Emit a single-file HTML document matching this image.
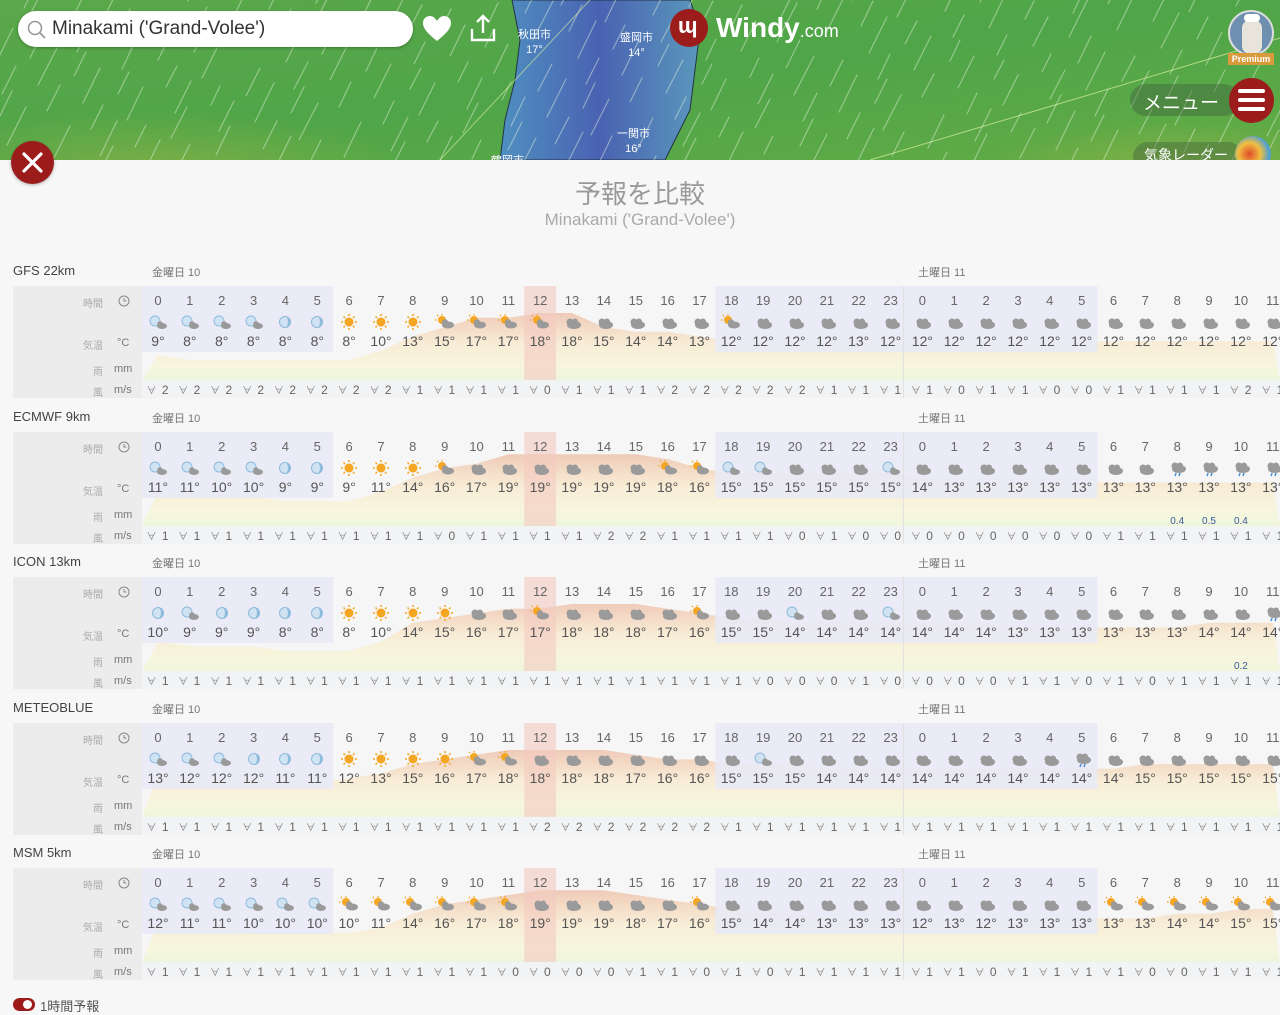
<!DOCTYPE html>
<html><head><meta charset="utf-8">
<style>
*{margin:0;padding:0;box-sizing:border-box}
body{width:1280px;height:1011px;overflow:hidden;background:#f7f7f7;font-family:"Liberation Sans","Noto Sans CJK JP",sans-serif;position:relative}
#map{position:absolute;left:0;top:0;width:1280px;height:160px;overflow:hidden}
.abs{position:absolute}
.blk{position:absolute;left:0;width:1280px;height:146px}
.ttl{position:absolute;left:13px;top:-3px;font-size:13px;color:#444}
.day{position:absolute;top:-2px;font-size:11px;color:#777}
.box{position:absolute;left:13px;top:20px;width:1267px;height:112px;background:#ececec;overflow:hidden}
.lab{position:absolute;font-size:10px;color:#aaa}
.unit{position:absolute;font-size:11px;color:#777}
.c{position:absolute;width:32px;text-align:center;color:#666}
</style></head><body>
<div id="map">
<svg width="1280" height="160" style="position:absolute;left:0;top:0">
<defs>
<linearGradient id="gg" x1="0" y1="0" x2="1" y2="1"><stop offset="0" stop-color="#5aa84a"/><stop offset="0.5" stop-color="#4fa548"/><stop offset="1" stop-color="#62ab46"/></linearGradient>
<linearGradient id="bl" x1="0" y1="0" x2="1" y2="0"><stop offset="0" stop-color="#4f8fc0"/><stop offset="0.5" stop-color="#4a62b2"/><stop offset="1" stop-color="#5a98bc"/></linearGradient>
<radialGradient id="y1" cx="0.5" cy="0.5" r="0.5"><stop offset="0" stop-color="#a8b845" stop-opacity="0.5"/><stop offset="1" stop-color="#a8b845" stop-opacity="0"/></radialGradient>
</defs>
<rect width="1280" height="160" fill="url(#gg)"/>
<ellipse cx="150" cy="170" rx="260" ry="60" fill="url(#y1)"/>
<ellipse cx="1180" cy="170" rx="200" ry="50" fill="url(#y1)"/>
<path d="M512 0 L690 0 L700 30 L695 70 L690 110 L675 140 L665 160 L500 160 L505 120 L515 80 L520 40 Z" fill="url(#bl)" stroke="#234" stroke-width="1"/>
<line x1="590" y1="0" x2="440" y2="160" stroke="#d8f0a0" stroke-width="1" opacity="0.6"/>
<line x1="1280" y1="38" x2="870" y2="160" stroke="#d8f0a0" stroke-width="1" opacity="0.7"/>
<g id="rain" stroke="#e4f2dc" stroke-width="1.2" opacity="0.45" stroke-linecap="round"></g>
</svg>
<div class="abs" style="left:18px;top:11px;width:395px;height:36px;background:#fff;border-radius:18px;box-shadow:0 1px 3px rgba(0,0,0,.3)">
<svg class="abs" style="left:9px;top:9px" width="20" height="20"><circle cx="8" cy="8" r="6.5" fill="none" stroke="#999" stroke-width="1.6"/><line x1="13" y1="13" x2="18" y2="18" stroke="#999" stroke-width="1.8"/></svg>
<div class="abs" style="left:34px;top:7px;font-size:19px;color:#333">Minakami ('Grand-Volee')</div></div>
<svg class="abs" style="left:422px;top:15px" width="30" height="28"><path d="M15 26 C5 18 1 13 1 8 C1 3 5 1 8 1 C11 1 13 3 15 6 C17 3 19 1 22 1 C25 1 29 3 29 8 C29 13 25 18 15 26Z" fill="#fff"/></svg>
<svg class="abs" style="left:468px;top:13px" width="30" height="30"><path d="M15 3 V20 M9 9 L15 3 L21 9 M4 16 V27 H26 V16" fill="none" stroke="#fff" stroke-width="2.4"/></svg>
<div class="abs" style="left:518px;top:28px;font-size:11px;color:#fff;text-align:center;line-height:15px">秋田市<br>17°</div>
<div class="abs" style="left:620px;top:31px;font-size:11px;color:#fff;text-align:center;line-height:15px">盛岡市<br>14°</div>
<div class="abs" style="left:617px;top:127px;font-size:11px;color:#fff;text-align:center;line-height:15px">一関市<br>16°</div>
<div class="abs" style="left:491px;top:152px;font-size:11px;color:#fff">鶴岡市</div>
<div class="abs" style="left:670px;top:9px;width:38px;height:38px;border-radius:50%;background:#9c1c1c"><div class="abs" style="left:8px;top:4px;font-size:22px;color:#fff;font-weight:bold">ɰ</div></div>
<div class="abs" style="left:716px;top:12px;font-size:28px;color:#fff;font-weight:bold">Windy<span style="font-size:18px;font-weight:normal">.com</span></div>
<div class="abs" style="left:1228px;top:10px;width:46px;height:46px;border-radius:50%;background:#6d8fb0;border:2px solid #ddd;overflow:hidden"><div class="abs" style="left:12px;top:8px;width:20px;height:34px;background:#e8e4dc;border-radius:8px"></div><div class="abs" style="left:14px;top:2px;width:16px;height:8px;background:#fff;border-radius:6px"></div></div>
<div class="abs" style="left:1228px;top:53px;width:46px;height:12px;background:#d89a3a;font-size:9px;color:#fff;text-align:center;font-weight:bold;line-height:12px">Premium</div>
<div class="abs" style="left:1130px;top:84px;width:110px;height:32px;border-radius:16px;background:rgba(60,90,60,.4)"></div>
<div class="abs" style="left:1143px;top:88px;font-size:19px;color:#fff">メニュー</div>
<div class="abs" style="left:1229px;top:78px;width:45px;height:45px;border-radius:50%;background:#9c1c1c"><div class="abs" style="left:9px;top:11px;width:27px;height:4px;background:#fff;border-radius:2px"></div><div class="abs" style="left:9px;top:20px;width:27px;height:4px;background:#fff;border-radius:2px"></div><div class="abs" style="left:9px;top:29px;width:27px;height:4px;background:#fff;border-radius:2px"></div></div>
<div class="abs" style="left:1133px;top:142px;width:110px;height:30px;border-radius:15px;background:rgba(60,90,60,.4)"></div>
<div class="abs" style="left:1144px;top:145px;font-size:14px;color:#fff">気象レーダー</div>
<div class="abs" style="left:1235px;top:136px;width:36px;height:36px;border-radius:50%;background:radial-gradient(circle at 40% 50%,#e04a2a,#f0c040 40%,#50a0d0 70%)"></div>
</div>
<div class="abs" style="left:11px;top:141px;width:43px;height:43px;border-radius:50%;background:#9c1c1c;box-shadow:0 1px 3px rgba(0,0,0,.3)"><svg width="43" height="43"><path d="M13 13 L30 30 M30 13 L13 30" stroke="#fff" stroke-width="3.2" stroke-linecap="round"/></svg></div>
<div class="abs" style="left:0;width:1280px;top:174px;text-align:center;font-size:26px;color:#999">予報を比較</div>
<div class="abs" style="left:0;width:1280px;top:210px;text-align:center;font-size:17px;color:#aaa">Minakami ('Grand-Volee')</div>
<div id="blocks"></div>
<div class="abs" style="left:13px;top:998px;width:22px;height:13px;border-radius:7px;background:#9c1c1c"><div class="abs" style="left:10px;top:2px;width:9px;height:9px;border-radius:50%;background:#fff"></div></div>
<div class="abs" style="left:40px;top:996px;font-size:13px;color:#555">1時間予報</div>
<script>
(function(){
var g=document.getElementById('rain'),s='';
for(var i=0;i<220;i++){var x=(i*97.3)%1340-20,y=(i*61.7)%190-10,l=18+(i*7)%22;
s+='<line x1="'+x.toFixed(0)+'" y1="'+y.toFixed(0)+'" x2="'+(x+l*0.5).toFixed(0)+'" y2="'+(y-l).toFixed(0)+'"/>';}
g.innerHTML=s;
var M=[
{n:'GFS 22km',t:[9,8,8,8,8,8,8,10,13,15,17,17,18,18,15,14,14,13,12,12,12,12,13,12,12,12,12,12,12,12,12,12,12,12,12,12],
w:[2,2,2,2,2,2,2,2,1,1,1,1,0,1,1,1,2,2,2,2,2,1,1,1,1,0,1,1,0,0,1,1,1,1,2,1],
i:'mmmmMMsssSSSScccccScccccccccccccccccc',r:{}},
{n:'ECMWF 9km',t:[11,11,10,10,9,9,9,11,14,16,17,19,19,19,19,19,18,16,15,15,15,15,15,15,14,13,13,13,13,13,13,13,13,13,13,13],
w:[1,1,1,1,1,1,1,1,1,0,1,1,1,1,2,2,1,1,1,1,0,1,0,0,0,0,0,0,0,0,1,1,1,1,1,1],
i:'mmmmMMsssSccccccSSmmcccmccccccccrrrrr',r:{32:'0.4',33:'0.5',34:'0.4'}},
{n:'ICON 13km',t:[10,9,9,9,8,8,8,10,14,15,16,17,17,18,18,18,17,16,15,15,14,14,14,14,14,14,14,13,13,13,13,13,13,14,14,14],
w:[1,1,1,1,1,1,1,1,1,1,1,1,1,1,1,1,1,1,1,0,0,0,1,0,0,0,0,1,1,0,1,0,1,1,1,1],
i:'MmMMMMssssccSccccSccmccmcccccccccccrr',r:{34:'0.2'}},
{n:'METEOBLUE',t:[13,12,12,12,11,11,12,13,15,16,17,18,18,18,18,17,16,16,15,15,15,14,14,14,14,14,14,14,14,14,14,15,15,15,15,15],
w:[1,1,1,1,1,1,1,1,1,1,1,1,2,2,2,2,2,2,1,1,1,1,1,1,1,1,1,1,1,1,1,1,1,1,1,1],
i:'mmmMMMssssSScccccccmcccccccccrccccccc',r:{}},
{n:'MSM 5km',t:[12,11,11,10,10,10,10,11,14,16,17,18,19,19,19,18,17,16,15,14,14,13,13,13,12,13,12,13,13,13,13,13,14,14,15,15],
w:[1,1,1,1,1,1,1,1,1,1,1,0,0,0,0,1,1,0,1,0,1,1,1,1,1,1,0,1,1,1,1,0,0,1,1,1],
i:'mmmmmmSSSSSScccccSccccccccccccSSSSSS',r:{}}];
var icons={
s:'<circle cx="11" cy="8" r="4.5" fill="#f5a623"/><g stroke="#f5a623" stroke-width="1.5"><line x1="11" y1="0" x2="11" y2="2"/><line x1="11" y1="14" x2="11" y2="16"/><line x1="3" y1="8" x2="5" y2="8"/><line x1="17" y1="8" x2="19" y2="8"/><line x1="5.5" y1="2.5" x2="7" y2="4"/><line x1="15" y1="12" x2="16.5" y2="13.5"/><line x1="16.5" y1="2.5" x2="15" y2="4"/><line x1="7" y1="12" x2="5.5" y2="13.5"/></g>',
S:'<circle cx="8" cy="6" r="4" fill="#f5a623"/><g stroke="#f5a623" stroke-width="1.3"><line x1="8" y1="0" x2="8" y2="1.5"/><line x1="1" y1="6" x2="2.5" y2="6"/><line x1="3" y1="1" x2="4" y2="2"/></g><ellipse cx="14" cy="11" rx="6" ry="3.5" fill="#9a9a9a"/><circle cx="11" cy="8.5" r="3.2" fill="#9a9a9a"/>',
c:'<ellipse cx="13" cy="11" rx="7" ry="4" fill="#9a9a9a"/><circle cx="9" cy="8" r="3.5" fill="#9a9a9a"/><circle cx="14" cy="7.5" r="3" fill="#9a9a9a"/>',
m:'<circle cx="8" cy="7" r="5" fill="#cfe3f2" stroke="#8ebadb" stroke-width="1"/><ellipse cx="15" cy="12" rx="5" ry="3" fill="#9a9a9a"/><circle cx="13" cy="10" r="2.8" fill="#9a9a9a"/>',
M:'<circle cx="11" cy="8" r="5.5" fill="#cfe3f2" stroke="#8ebadb" stroke-width="1"/><path d="M11 2.5 A5.5 5.5 0 0 1 11 13.5 A3 5.5 0 0 0 11 2.5Z" fill="#8ebadb"/>',
r:'<ellipse cx="13" cy="9" rx="7" ry="4" fill="#9a9a9a"/><circle cx="9" cy="6" r="3.5" fill="#9a9a9a"/><circle cx="14" cy="5.5" r="3" fill="#9a9a9a"/><g stroke="#4a8fd8" stroke-width="1.5"><line x1="10" y1="13" x2="9" y2="16"/><line x1="14" y1="13" x2="13" y2="16"/></g>'};
var CW=31.85,X0=129;
var out='';
M.forEach(function(m,k){
 var top=266+k*145.5,h='';
 h+='<div class="blk" style="top:'+top+'px"><div class="ttl">'+m.n+'</div><div class="day" style="left:152px">金曜日 10</div><div class="day" style="left:918px">土曜日 11</div><div class="box">';
 var sv='<svg width="1267" height="112" style="position:absolute;left:0;top:0"><defs><linearGradient id="tg'+k+'" x1="0" y1="0" x2="0" y2="1"><stop offset="0" stop-color="#efcbb8"/><stop offset="0.45" stop-color="#f8ecd6"/><stop offset="0.8" stop-color="#f7f6de"/><stop offset="1" stop-color="#eef6dc"/></linearGradient></defs>';
 sv+='<rect x="'+X0+'" y="0" width="1140" height="112" fill="#f6f6f6"/>';
 var d='M'+X0+' 94';
 for(var j=0;j<36;j++){var y=74-(m.t[j]-8)*4.7;d+=' L'+(X0+j*CW+16).toFixed(1)+' '+y.toFixed(1);}
 d+=' L1267 94 Z';
 sv+='<path d="'+d+'" fill="url(#tg'+k+')"/>';
 sv+='<rect x="'+X0+'" y="0" width="'+(6*CW).toFixed(1)+'" height="66" fill="#e8e9f5" opacity="0.92"/>';
 sv+='<rect x="'+(X0+18*CW).toFixed(1)+'" y="0" width="'+(12*CW).toFixed(1)+'" height="66" fill="#e8e9f5" opacity="0.92"/>';
 sv+='<rect x="'+(X0+12*CW).toFixed(1)+'" y="0" width="'+CW.toFixed(1)+'" height="94" fill="#f3c9c0" opacity="0.6"/>';
 sv+='<rect x="'+X0+'" y="94" width="1140" height="18" fill="#f2f3f5"/>';
 sv+='<line x1="'+(X0+24*CW-3).toFixed(1)+'" y1="0" x2="'+(X0+24*CW-3).toFixed(1)+'" y2="112" stroke="#e0e0e0"/>';
 sv+='</svg>';
 h+=sv;
 h+='<div class="lab" style="left:70px;top:9px">時間</div><svg class="abs" style="left:105px;top:9px" width="12" height="12"><circle cx="6" cy="6" r="5" fill="none" stroke="#888"/><path d="M6 3V6H8.5" fill="none" stroke="#888"/></svg>';
 h+='<div class="lab" style="left:70px;top:51px">気温</div><div class="unit" style="left:104px;top:51px">°C</div>';
 h+='<div class="lab" style="left:80px;top:77px">雨</div><div class="unit" style="left:101px;top:77px">mm</div>';
 h+='<div class="lab" style="left:80px;top:98px">風</div><div class="unit" style="left:101px;top:98px">m/s</div>';
 for(var j=0;j<36;j++){
  var x=(X0+j*CW).toFixed(1),hr=j<24?j:j-24;
  h+='<div class="c" style="left:'+x+'px;top:7px;font-size:13px">'+hr+'</div>';
  h+='<svg class="abs" style="left:'+(X0+j*CW+5).toFixed(1)+'px;top:28px" width="22" height="17">'+(icons[m.i[j]]||icons.c)+'</svg>';
  h+='<div class="c" style="left:'+x+'px;top:47px;font-size:14px;color:#555">'+m.t[j]+'°</div>';
  if(m.r[j])h+='<div class="c" style="left:'+x+'px;top:84px;font-size:10px;color:#3a5a9a">'+m.r[j]+'</div>';
  h+='<div class="c" style="left:'+x+'px;top:96px;font-size:12px;color:#666;letter-spacing:1px"><span style="font-size:10px;color:#888">∀</span> '+m.w[j]+'</div>';
 }
 h+='</div></div>';
 out+=h;
});
document.getElementById('blocks').innerHTML=out;
})();
</script>
</body></html>
